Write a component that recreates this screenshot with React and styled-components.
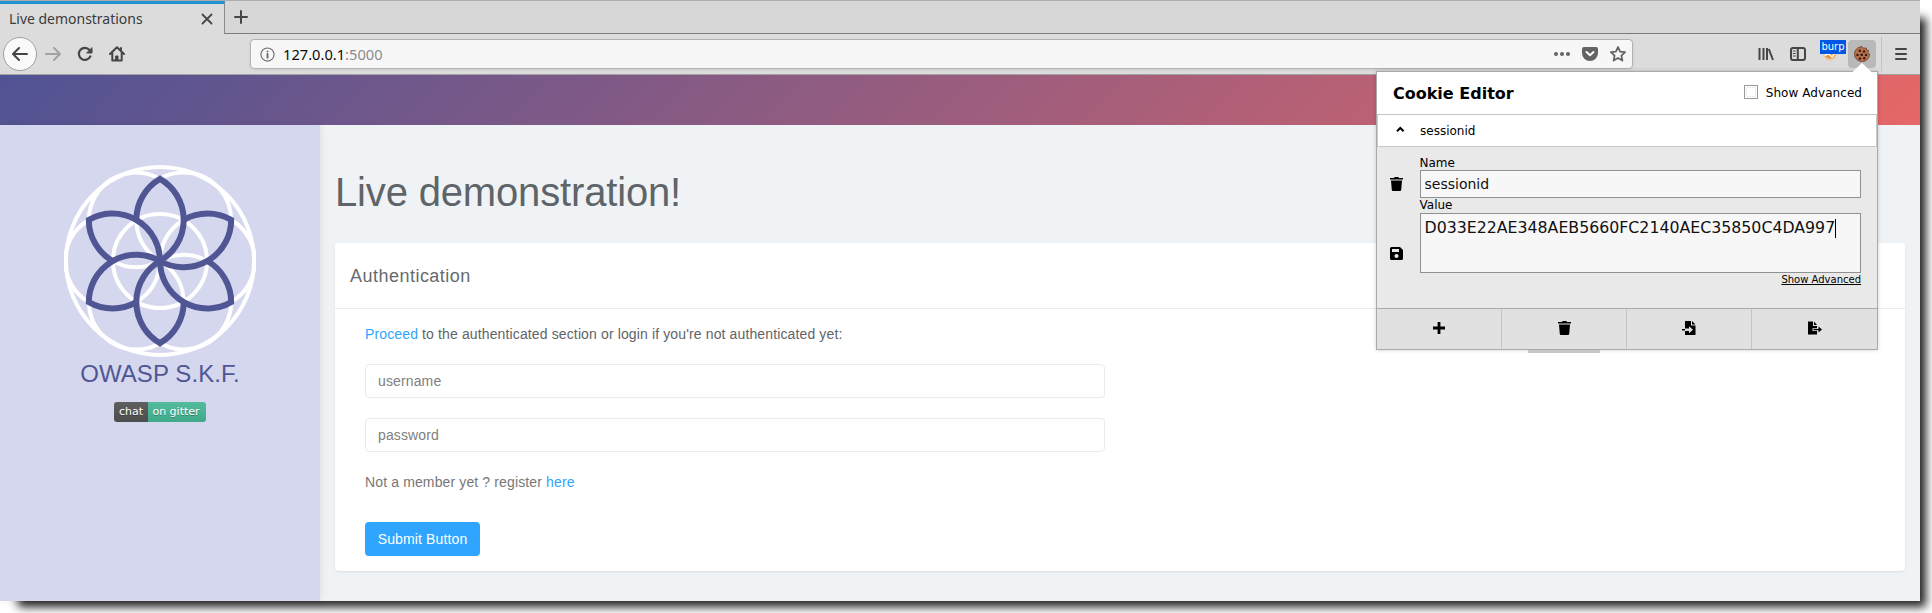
import React from 'react';
import styled, { createGlobalStyle } from 'styled-components';

const Global = createGlobalStyle`
  * { box-sizing: border-box; }
  body { margin: 0; background: #fff; }
  input, textarea, button { font: inherit; letter-spacing: inherit; }
`;

const sans = '"Liberation Sans", Arial, sans-serif';
const dejavu = '"DejaVu Sans", sans-serif';
const noto = '"Noto Sans", sans-serif';

const Desktop = styled.div`
  width: 1932px;
  height: 613px;
  overflow: hidden;
`;
const Window = styled.div`
  position: relative;
  width: 1920px;
  height: 601px;
  display: flex;
  flex-direction: column;
  box-shadow: 12px 12px 9px -6px #222;
`;

const TabStrip = styled.div`
  height: 34px;
  flex: none;
  display: flex;
  background: #d7d7d7;
  border-top: 1px solid #adadad;
`;
const Tab = styled.div`
  width: 225px;
  height: 33px;
  display: flex;
  align-items: center;
  justify-content: space-between;
  padding: 0 11px 1px 9px;
  background: #dcdcdc;
  border-top: 3px solid #2292d0;
  border-right: 1px solid #8a8a8a;
  font: 14.6px ${noto};
  color: #3b3b3b;
`;
const TabTitle = styled.span`
  display: block;
  margin-top: -2px;
  transform: scaleX(0.957);
  transform-origin: left;
  white-space: nowrap;
`;
const TabRest = styled.div`
  flex: 1;
  display: flex;
  align-items: center;
  padding-left: 8px;
  border-bottom: 1px solid #7c7c7c;
`;

const Toolbar = styled.div`
  height: 41px;
  flex: none;
  display: flex;
  align-items: center;
  background: #dcdcdc;
  border-bottom: 1px solid #a2a2a2;
  padding-left: 3px;
`;
const NavButtons = styled.div`
  width: 247px;
  display: flex;
  align-items: center;
  gap: 16px;
`;
const BackButton = styled.div`
  width: 34px;
  height: 34px;
  margin-right: -8px;
  display: grid;
  place-items: center;
  border: 1px solid #a0a0a0;
  border-radius: 50%;
  background: #fafafa;
`;
const UrlBar = styled.div`
  width: 1383px;
  height: 30px;
  display: flex;
  align-items: center;
  padding: 0 6px 0 9px;
  border: 1px solid #b2b2b2;
  border-radius: 4px;
  background: #f7f7f7;
  box-shadow: 0 1px 3px rgba(0, 0, 0, 0.07);
`;
const Url = styled.div`
  flex: 1;
  margin-left: 8px;
  font: 15.2px ${noto};
  transform: scaleX(0.965);
  transform-origin: left;
  color: #0c0c0d;
  span { color: #8b8b8b; }
`;
const UrlActions = styled.div`
  display: flex;
  align-items: center;
  gap: 12px;
`;
const ToolIcons = styled.div`
  display: flex;
  align-items: center;
  margin-left: 117px;
`;
const IconSlot = styled.div`
  position: relative;
  width: 32px;
  height: 28px;
  display: grid;
  place-items: center;
`;
const ActiveSlot = styled(IconSlot)`
  width: 28px;
  margin-left: 2px;
  border-radius: 4px;
  background: #b9b9b9;
`;
const BurpBadge = styled.span`
  position: absolute;
  left: 6px;
  top: 0;
  width: 26px;
  height: 14px;
  background: #0057e5;
  color: #fff;
  font: 10px/13px ${dejavu};
  text-align: center;
`;
const MenuSlot = styled.div`
  height: 34px;
  display: flex;
  align-items: center;
  margin-left: 5px;
  padding-left: 13px;
  border-left: 1px solid #c2c2c2;
`;

const Banner = styled.div`
  height: 50px;
  flex: none;
  background: linear-gradient(135deg, #505394, #e66767);
`;
const Page = styled.div`
  flex: 1;
  display: flex;
  background: #eff3f6;
  font-family: ${sans};
`;
const Sidebar = styled.aside`
  width: 320px;
  display: flex;
  flex-direction: column;
  align-items: center;
  padding-top: 40px;
  background: #d5d7ee;
  box-shadow: 1px 0 8px rgba(0, 0, 0, 0.08);
`;
const Brand = styled.div`
  margin-top: 2px;
  font-size: 24px;
  line-height: 30px;
  letter-spacing: 0.08px;
  color: #505694;
`;
const Gitter = styled.div`
  display: flex;
  margin-top: 13px;
  height: 20px;
  border-radius: 3px;
  overflow: hidden;
  font: 11px/19px ${dejavu};
  color: #fff;
  text-shadow: 0 1px rgba(1, 1, 1, 0.3);
`;
const GitterPart = styled.span`
  width: ${p => p.$w}px;
  padding-right: ${p => p.$pr || 0}px;
  text-align: center;
  background: linear-gradient(rgba(187, 187, 187, 0.1), rgba(0, 0, 0, 0.1)), ${p => p.$c};
`;
const Main = styled.main`
  flex: 1;
  padding: 44px 15px 0;
`;
const Title = styled.h1`
  margin: 0 0 28px;
  font-weight: 400;
  font-size: 40px;
  line-height: 46px;
  letter-spacing: -0.16px;
  color: #5f6468;
`;
const Card = styled.section`
  height: 328px;
  border-radius: 4px;
  background: #fff;
  box-shadow: 0 1px 2px rgba(0, 0, 0, 0.09);
`;
const CardHeader = styled.h2`
  height: 66px;
  margin: 0;
  padding: 0 15px;
  border-bottom: 1px solid #e9ebec;
  font-weight: 400;
  font-size: 18px;
  line-height: 66px;
  letter-spacing: 0.48px;
  color: #676a6d;
`;
const Form = styled.div`
  display: flex;
  flex-direction: column;
  align-items: flex-start;
  padding: 15px 30px 0;
  font-size: 14px;
  line-height: 20px;
  letter-spacing: 0.13px;
`;
const Link = styled.a`
  color: #30a5ff;
`;
const Copy = styled.p`
  margin: 0;
  color: #5f6468;
`;
const Hint = styled(Copy)`
  margin-top: 20px;
  color: #777;
`;
const Field = styled.input`
  width: 740px;
  height: 34px;
  margin-top: 20px;
  padding: 0 12px 1px;
  border: 1px solid #eaebec;
  border-radius: 4px;
  background: #fff;
  &::placeholder { color: #7f7f7f; opacity: 1; }
`;
const Submit = styled.button`
  height: 34px;
  width: 115px;
  margin-top: 30px;
  padding: 0;
  border: 0;
  border-radius: 4px;
  background: #30a5ff;
  color: #fff;
`;

const Popup = styled.div`
  position: absolute;
  left: 1376px;
  top: 71px;
  width: 502px;
  height: 279px;
  display: flex;
  flex-direction: column;
  border: 1px solid #aaa;
  background: #e9e9e9;
  box-shadow: 0 0 4px rgba(0, 0, 0, 0.18);
  font: 12px ${dejavu};
  color: #000;
`;
const Arrow = styled.svg`
  position: absolute;
  right: 5px;
  top: -9px;
`;
const DragHandle = styled.div`
  position: absolute;
  left: 151px;
  bottom: -4px;
  width: 72px;
  height: 3px;
  background: #c6c6c6;
`;
const PopupHead = styled.div`
  height: 43px;
  flex: none;
  display: flex;
  align-items: center;
  justify-content: space-between;
  padding: 0 15px 0 16px;
  background: #fff;
  border-bottom: 1px solid #c4c4c4;
  b { font-size: 16px; }
`;
const Advanced = styled.label`
  display: flex;
  align-items: center;
  gap: 8px;
  letter-spacing: 0.06px;
`;
const CheckBox = styled.span`
  width: 14px;
  height: 14px;
  margin-top: -3px;
  border: 1px solid #999;
  box-shadow: inset 0 0 0 1px #fff, inset 0 0 0 2px #eee;
`;
const CookieRow = styled.div`
  height: 32px;
  flex: none;
  display: flex;
  align-items: center;
  padding-left: 17px;
  background: #fff;
  border: 1px solid #c8c8c8;
  border-top: 0;
  gap: 14px;
`;
const Editor = styled.div`
  height: 161px;
  flex: none;
  display: flex;
  padding: 9px 16px 0 13px;
`;
const SideActions = styled.div`
  width: 29.500px;
  display: flex;
  flex-direction: column;
  gap: 56px;
  padding-top: 21px;
`;
const Fields = styled.div`
  flex: 1;
  display: flex;
  flex-direction: column;
`;
const Label = styled.label`
  height: ${p => p.$h}px;
  line-height: 15px;
`;
const CookieInput = styled.div`
  height: ${p => p.$h}px;
  padding-left: 4px;
  border: 1px solid #909090;
  background: #f7f7f7;
  color: #111;
  font-size: ${p => p.$fs}px;
  line-height: ${p => p.$lh}px;
  white-space: nowrap;
`;
const Caret = styled.span`
  display: inline-block;
  width: 1px;
  height: 19px;
  vertical-align: -5px;
  background: #000;
`;
const ShowLink = styled.a`
  align-self: flex-end;
  font-size: 10px;
  line-height: 14px;
  text-decoration: underline;
`;
const Actions = styled.div`
  flex: 1;
  display: grid;
  grid-template-columns: repeat(4, 1fr);
  background: #e1e1e1;
  border-top: 1px solid #aaa;
`;
const Action = styled.div`
  display: grid;
  place-items: center;
  padding-bottom: 2px;
  border-right: 1px solid #c4c4c4;
  &:last-child { border-right: 0; }
`;

const Icon = ({ s = 16, w = s, h = s, vb = '0 0 16 16', children, fill = 'none', sw = 2, color = '#464646' }) => (
  <svg width={w} height={h} viewBox={vb} fill={fill} stroke={color} strokeWidth={sw} strokeLinecap="round" strokeLinejoin="round">{children}</svg>
);

const Trash = () => (
  <Icon w={13} h={14} vb="0 0 13 14" fill="#000" color="none"><path d="M0 1h4l.7-1h3.6L9 1h4v1.600H0zM1 3.500h11L11.200 13q-.1 1-1.200 1H3q-1.100 0-1.200-1z" /></Icon>
);

const PETALS = [0, 60, 120, 180, 240, 300];

function Logo() {
  return (
    <svg width="192" height="192" viewBox="0 0 192 192" fill="none">
      <g stroke="#fff" strokeWidth="4">
        <circle cx="96" cy="96" r="94" />
        <circle cx="96" cy="96" r="47" />
        {PETALS.map(a => <circle key={a} cx="119.700" cy="54.900" r="47.300" transform={`rotate(${a} 96 96)`} />)}
      </g>
      <g stroke="#505694" strokeWidth="6" strokeLinejoin="miter">
        {PETALS.map(a => (
          <path key={a} d="M72.300 54.900A47.500 47.500 0 0 1 96 13.800A47.500 47.500 0 0 1 96 96" transform={`rotate(${a} 96 96)`} />
        ))}
      </g>
    </svg>
  );
}

function Browser() {
  return (
    <>
      <TabStrip>
        <Tab>
          <TabTitle>Live demonstrations</TabTitle>
          <Icon s={12} vb="0 0 12 12" sw={1.8}><path d="M1.500 1.500l9 9M10.500 1.500l-9 9" /></Icon>
        </Tab>
        <TabRest>
          <Icon><path d="M8 2v12M2 8h12" /></Icon>
        </TabRest>
      </TabStrip>
      <Toolbar>
        <NavButtons>
          <BackButton><Icon><path d="M15 8H1.500M7 2L1 8l6 6" /></Icon></BackButton>
          <Icon color="#a2a2a2"><path d="M1 8h13.500M9 2l6 6-6 6" /></Icon>
          <Icon sw={2.2}><path d="M13.300 10.500A6 6 0 1 1 12.500 4" /><path d="M15 2v5H10z" fill="#464646" strokeWidth="1" /></Icon>
          <Icon><path d="M1 8l7-6.800L15 8M3.300 7v7.500h9.400V7" /><path d="M7 10h2v4H7z" fill="#464646" strokeWidth="1" /><path d="M12 2v2" /></Icon>
        </NavButtons>
        <UrlBar>
          <Icon s={15} color="#6c6c6c" sw={1.200}><circle cx="8" cy="8" r="7" /><path d="M8 7.500v4M8 4.600v.2" strokeWidth="2" /></Icon>
          <Url>127.0.0.1<span>:5000</span></Url>
          <UrlActions>
            <Icon fill="#646464" color="none"><circle cx="2" cy="8" r="2" /><circle cx="8" cy="8" r="2" /><circle cx="14" cy="8" r="2" /></Icon>
            <Icon><path d="M2 1h12q2 0 2 2v4a8 8 0 0 1-16 0V3q0-2 2-2z" fill="#646464" stroke="none" /><path d="M4.500 6L8 9.300 11.500 6" stroke="#fff" /></Icon>
            <Icon color="#646464" sw={1.800}><path d="M8 1l2.100 4.600 5 .6-3.700 3.400 1 5L8 12l-4.400 2.600 1-5L.9 6.200l5-.6z" /></Icon>
          </UrlActions>
        </UrlBar>
        <ToolIcons>
          <IconSlot><Icon><path d="M1.500 2v12M5.500 2v12M9 2v12M10.800 3l4.200 11" strokeLinecap="butt" /></Icon></IconSlot>
          <IconSlot><Icon><rect x="1" y="2" width="14" height="12" rx="2" /><path d="M7.800 2v12" /><path d="M3.300 5h2M3.300 7.500h2M3.300 10h2" strokeWidth="1" /></Icon></IconSlot>
          <IconSlot>
            <Icon color="none" fill="#e5933c"><circle cx="8" cy="7.500" r="7" fill="#ebc799" /><circle cx="8" cy="7" r="5.500" /><path d="M3 9l4-1 3 3 3-4" stroke="#fff" strokeWidth="1.300" fill="none" /></Icon>
            <BurpBadge>burp</BurpBadge>
          </IconSlot>
          <ActiveSlot>
            <Icon color="none" fill="#2e1a12">
              <path d="M7.500 .6A7.500 7.500 0 1 0 15.500 8L14 6.500 14.500 4.500 12.500 4 12 2 9.500 2.200z" fill="#b8714c" stroke="#6d422c" strokeWidth=".9" />
              <circle cx="5.800" cy="4.800" r="1.200" /><circle cx="10" cy="5.500" r="1.200" /><circle cx="3.500" cy="9" r="1.200" /><circle cx="7.700" cy="8.700" r="1.300" /><circle cx="12" cy="9" r="1.200" /><circle cx="6" cy="12.500" r="1.200" /><circle cx="10.200" cy="12.300" r="1.200" />
            </Icon>
          </ActiveSlot>
          <MenuSlot><Icon w={12} vb="0 0 12 16"><path d="M1 3h10M1 8h10M1 13h10" /></Icon></MenuSlot>
        </ToolIcons>
      </Toolbar>
    </>
  );
}

function CookieEditor() {
  return (
    <Popup>
      <Arrow width="20" height="11" viewBox="0 0 20 11"><path d="M0 9.500L10 0l10 9.500V11H0z" fill="#fff" /></Arrow>
      <PopupHead><b>Cookie Editor</b><Advanced><CheckBox />Show Advanced</Advanced></PopupHead>
      <CookieRow>
        <Icon s={11} vb="0 0 11 11" color="#000" sw={2}><path d="M2 6.200L5.300 3l3.300 3.200" strokeLinecap="butt" strokeLinejoin="miter" /></Icon>
        <span>sessionid</span>
      </CookieRow>
      <Editor>
        <SideActions>
          <Trash />
          <Icon s={13} vb="0 0 13 13" fill="#000" color="none"><path fillRule="evenodd" d="M1.500 0H10l3 3v8.500q0 1.500-1.500 1.500h-10Q0 13 0 11.500v-10Q0 0 1.500 0zM2 2v3h7V2zM6.500 7a2 2 0 1 0 .01 0z" /></Icon>
        </SideActions>
        <Fields>
          <Label $h={14}>Name</Label>
          <CookieInput $h={28} $fs={14} $lh={26}>sessionid</CookieInput>
          <Label $h={15}>Value</Label>
          <CookieInput $h={60} $fs={15.780} $lh={28}>D033E22AE348AEB5660FC2140AEC35850C4DA997<Caret /></CookieInput>
          <ShowLink>Show Advanced</ShowLink>
        </Fields>
      </Editor>
      <Actions>
        <Action><Icon s={12} vb="0 0 12 12" color="#000" sw={2.800}><path d="M6 0v12M0 6h12" strokeLinecap="butt" /></Icon></Action>
        <Action><Trash /></Action>
        <Action><Icon s={14} vb="0 0 14 14" fill="#000" color="none"><path d="M3 0h6v4.500h4.500V14H3V10h4v2.200L11 8.700 7 5.200V7.500H3zM10 0l3.500 3.500H10zM0 8h3v1.600H0z" /></Icon></Action>
        <Action><Icon s={14} vb="0 0 14 14" fill="#000" color="none"><path d="M0 .5h5V5h4v2.300H4.500v2.600H9v3.600H0zM6 .5L9 4H6zM5.500 8h5V5.500L14 8.600l-3.500 3V9.300h-5z" /></Icon></Action>
      </Actions>
      <DragHandle />
    </Popup>
  );
}

export default function App() {
  return (
    <Desktop>
      <Global />
      <Window>
        <Browser />
        <Banner />
        <Page>
          <Sidebar>
            <Logo />
            <Brand>OWASP S.K.F.</Brand>
            <Gitter><GitterPart $w={34} $c="#555">chat</GitterPart><GitterPart $w={58} $pr={2} $c="#46bc99">on gitter</GitterPart></Gitter>
          </Sidebar>
          <Main>
            <Title>Live demonstration!</Title>
            <Card>
              <CardHeader>Authentication</CardHeader>
              <Form>
                <Copy><Link>Proceed</Link> to the authenticated section or login if you're not authenticated yet:</Copy>
                <Field placeholder="username" />
                <Field placeholder="password" />
                <Hint>Not a member yet ? register <Link>here</Link></Hint>
                <Submit>Submit Button</Submit>
              </Form>
            </Card>
          </Main>
        </Page>
        <CookieEditor />
      </Window>
    </Desktop>
  );
}
